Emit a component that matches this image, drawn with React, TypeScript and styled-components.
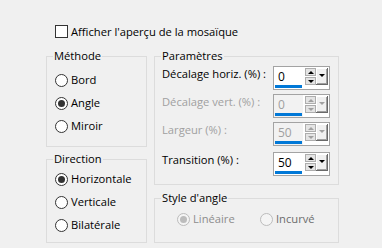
import React from "react";
import styled, { createGlobalStyle } from "styled-components";

const Global = createGlobalStyle`
  html, body { margin: 0; padding: 0; background: #f0f0f0; }
  body {
    font-family: "Open Sans", "Noto Sans", sans-serif;
    font-size: 11.2px;
    color: #000;
  }
`;

const Page = styled.div`
  width: 382px;
  height: 248px;
  box-sizing: border-box;
  padding: 25px 0 0 46px;
  display: flex;
  flex-direction: column;
`;

const CheckRow = styled.div`
  display: flex;
  align-items: center;
  gap: 3px;
  margin-left: 9px;
  height: 13px;
  line-height: 13px;
`;

const CheckBox = styled.span`
  width: 13px;
  height: 13px;
  box-sizing: border-box;
  border: 1px solid #333;
  background: #fff;
`;

const Columns = styled.div`
  display: flex;
  gap: 7px;
  margin-top: 18px;
`;

const Column = styled.div<{ $width: number; $gap: number }>`
  display: flex;
  flex-direction: column;
  width: ${(p) => p.$width}px;
  gap: ${(p) => p.$gap}px;
`;

const Group = styled.div<{ $height: number }>`
  position: relative;
  box-sizing: border-box;
  height: ${(p) => p.$height}px;
  border: 1px solid #dcdcdc;
`;

const GroupTitle = styled.span`
  position: absolute;
  top: -9px;
  left: 6px;
  padding: 0 1px;
  line-height: 16px;
  background: #f0f0f0;
  white-space: nowrap;
`;

const RadioList = styled.div<{ $top: number }>`
  display: flex;
  flex-direction: column;
  gap: 7px;
  padding: ${(p) => p.$top}px 0 0 8px;
`;

const RadioInline = styled.div`
  display: flex;
  padding: 12px 0 0 22px;
`;

const RadioRow = styled.div<{ $width?: number; $color?: string }>`
  display: flex;
  align-items: center;
  gap: 3px;
  height: 16px;
  line-height: 16px;
  white-space: nowrap;
  width: ${(p) => (p.$width ? `${p.$width}px` : "auto")};
  color: ${(p) => p.$color || "#000"};
`;

const Circle = styled.span<{ $checked?: boolean; $disabled?: boolean }>`
  display: flex;
  align-items: center;
  justify-content: center;
  flex: none;
  width: 13px;
  height: 13px;
  box-sizing: border-box;
  border-radius: 50%;
  border: 1px solid ${(p) => (p.$disabled ? "#bcbcbc" : "#333")};
  background: ${(p) => (p.$disabled ? "#f4f4f4" : "#fff")};
  &::after {
    content: "";
    display: ${(p) => (p.$checked ? "block" : "none")};
    width: 7px;
    height: 7px;
    border-radius: 50%;
    background: ${(p) => (p.$disabled ? "#bcbcbc" : "#333")};
  }
`;

const Params = styled.div`
  display: flex;
  flex-direction: column;
  gap: 4px;
  padding: 9px 0 0 7px;
`;

const ParamRow = styled.div<{ $extra?: number }>`
  display: flex;
  align-items: flex-start;
  margin-top: ${(p) => p.$extra || 0}px;
`;

const ParamLabel = styled.span<{ $disabled?: boolean }>`
  width: 111px;
  line-height: 16px;
  white-space: nowrap;
  color: ${(p) => (p.$disabled ? "#a0a0a0" : "#000")};
`;

const Spin = styled.div`
  display: flex;
  width: 57px;
  height: 24px;
  box-sizing: border-box;
  border: 1px solid #a3a3a3;
  background: #fff;
  padding-right: 1px;
`;

const Edit = styled.div<{ $disabled?: boolean }>`
  display: flex;
  flex-direction: column;
  width: 29px;
  background: ${(p) => (p.$disabled ? "#f2f2f2" : "#fff")};
  color: ${(p) => (p.$disabled ? "#a0a0a0" : "#000")};
`;

const EditValue = styled.span`
  flex: 1;
  padding: 3px 0 0 4px;
  line-height: 14px;
  font-size: 12px;
`;

const EditBar = styled.span`
  height: 3px;
  margin: 0 1px 1px 1px;
  background: #0078d7;
`;

const Steppers = styled.div`
  display: flex;
  flex-direction: column;
  gap: 1px;
  margin: 1px 0 0 2px;
`;

const Step = styled.span`
  display: flex;
  align-items: center;
  justify-content: center;
  width: 11px;
  height: 8px;
  box-sizing: border-box;
  border: 1px solid #adadad;
  background: #e4e4e4;
`;

const Tri = styled.span<{ $up?: boolean; $disabled?: boolean; $size?: number }>`
  width: 0;
  height: 0;
  border-left: ${(p) => p.$size || 3}px solid transparent;
  border-right: ${(p) => p.$size || 3}px solid transparent;
  ${(p) =>
    p.$up
      ? `border-bottom: ${p.$size || 3}px solid ${p.$disabled ? "#a0a0a0" : "#000"};`
      : `border-top: ${p.$size || 3}px solid ${p.$disabled ? "#a0a0a0" : "#000"};`}
`;

const Drop = styled.span`
  display: flex;
  justify-content: center;
  width: 12px;
  height: 17px;
  margin-top: 1px;
  box-sizing: border-box;
  padding-top: 6px;
  background: #f0f0f0;
  box-shadow: inset -1px -1px 0 #696969, inset 1px 1px 0 #fff, inset -2px -2px 0 #a0a0a0;
`;

type SpinProps = { value: string; disabled?: boolean };

function SpinBox({ value, disabled }: SpinProps) {
  return (
    <Spin>
      <Edit $disabled={disabled}>
        <EditValue>{value}</EditValue>
        <EditBar />
      </Edit>
      <Steppers>
        <Step>
          <Tri $up $disabled={disabled} />
        </Step>
        <Step>
          <Tri $disabled={disabled} />
        </Step>
      </Steppers>
      <Drop>
        <Tri $disabled={disabled} />
      </Drop>
    </Spin>
  );
}

type Opt = { label: string; checked?: boolean };

function Radio({ label, checked, disabled, width, color }: Opt & { disabled?: boolean; width?: number; color?: string }) {
  return (
    <RadioRow $width={width} $color={color}>
      <Circle $checked={checked} $disabled={disabled} />
      <span>{label}</span>
    </RadioRow>
  );
}

const methodes: Opt[] = [{ label: "Bord" }, { label: "Angle", checked: true }, { label: "Miroir" }];
const directions: Opt[] = [{ label: "Horizontale", checked: true }, { label: "Verticale" }, { label: "Bilatérale" }];

const params = [
  { label: "Décalage horiz. (%) :", value: "0", disabled: false, extra: 0 },
  { label: "Décalage vert. (%) :", value: "0", disabled: true, extra: 0 },
  { label: "Largeur (%) :", value: "50", disabled: true, extra: 0 },
  { label: "Transition (%) :", value: "50", disabled: false, extra: 2 },
];

export default function App() {
  return (
    <>
      <Global />
      <Page>
        <CheckRow>
          <CheckBox />
          <span>Afficher l'aperçu de la mosaïque</span>
        </CheckRow>
        <Columns>
          <Column $width={101} $gap={12}>
            <Group $height={91}>
              <GroupTitle>Méthode</GroupTitle>
              <RadioList $top={15}>
                {methodes.map((m) => (
                  <Radio key={m.label} {...m} />
                ))}
              </RadioList>
            </Group>
            <Group $height={84}>
              <GroupTitle>Direction</GroupTitle>
              <RadioList $top={11}>
                {directions.map((m) => (
                  <Radio key={m.label} {...m} />
                ))}
              </RadioList>
            </Group>
          </Column>
          <Column $width={185} $gap={13}>
            <Group $height={129}>
              <GroupTitle>Paramètres</GroupTitle>
              <Params>
                {params.map((p) => (
                  <ParamRow key={p.label} $extra={p.extra}>
                    <ParamLabel $disabled={p.disabled}>{p.label}</ParamLabel>
                    <SpinBox value={p.value} disabled={p.disabled} />
                  </ParamRow>
                ))}
              </Params>
            </Group>
            <Group $height={45}>
              <GroupTitle>Style d'angle</GroupTitle>
              <RadioInline>
                <Radio label="Linéaire" checked disabled width={83} color="#8d8d8d" />
                <Radio label="Incurvé" disabled color="#6d6d6d" />
              </RadioInline>
            </Group>
          </Column>
        </Columns>
      </Page>
    </>
  );
}
